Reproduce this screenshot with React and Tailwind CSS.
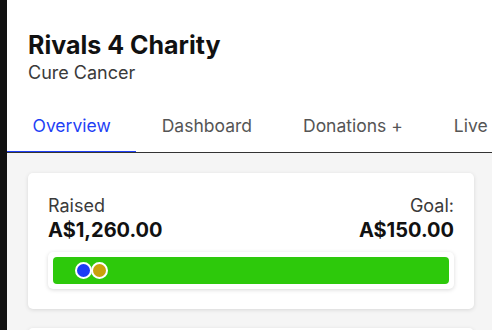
import React from "react";

export default function App() {
  const tabs = ["Overview", "Dashboard", "Donations +", "Live"];

  return (
    <div
      className="flex h-[330px] w-[492px] overflow-hidden bg-black"
      style={{ fontFamily: "Inter, 'Noto Sans', sans-serif" }}
    >
      <div className="w-[7px] shrink-0 bg-[#111111]" />
      <div className="flex min-w-0 flex-1 flex-col bg-[#f5f5f5]">
        {/* header */}
        <div className="bg-white">
          <div className="px-[21px] pt-[30px]">
            <h1 className="text-[25px] font-bold leading-[30px] text-[#111111]">
              Rivals 4 Charity
            </h1>
            <p className="text-[18px] leading-[26px] text-[#3a3a3a]">Cure Cancer</p>
          </div>
          <div className="mt-[28px] flex overflow-hidden border-b border-[#333333] whitespace-nowrap">
            {tabs.map((t, i) => (
              <div
                key={t}
                className={`-mb-px shrink-0 px-[25.5px] pb-[13px] text-[17.5px] leading-[24px] ${
                  i === 0
                    ? "border-b-2 border-[#1f3ff5] text-[#1f3ff5]"
                    : "border-b-2 border-transparent text-[#555555]"
                }`}
              >
                {t}
              </div>
            ))}
          </div>
        </div>

        {/* body */}
        <div className="flex flex-col gap-[19px] pl-[21px] pr-[18px] pt-[20px]">
          <div className="rounded-[5px] bg-white px-[20px] pb-[20px] pt-[22px] shadow-[0_1px_4px_rgba(0,0,0,0.12)]">
            <div className="flex justify-between">
              <div>
                <div className="text-[18px] leading-[22px] text-[#3a3a3a]">Raised</div>
                <div className="text-[20px] font-bold leading-[26px] text-[#111111]">
                  A$1,260.00
                </div>
              </div>
              <div className="text-right">
                <div className="text-[18px] leading-[22px] text-[#3a3a3a]">Goal:</div>
                <div className="text-[20px] font-bold leading-[26px] text-[#111111]">
                  A$150.00
                </div>
              </div>
            </div>
            <div className="mt-[9px] rounded-[5px] bg-white p-[5px] shadow-[0_1px_4px_rgba(0,0,0,0.15)]">
              <div className="flex h-[27px] items-center rounded-[4px] bg-[#2dc90b] pl-[22px]">
                <span className="h-[17px] w-[17px] rounded-full border-2 border-white bg-[#1d3cf5]" />
                <span className="-ml-[1px] h-[17px] w-[17px] rounded-full border-2 border-white bg-[#c9a10a]" />
              </div>
            </div>
          </div>
          <div className="h-[40px] rounded-[5px] bg-white shadow-[0_1px_4px_rgba(0,0,0,0.12)]" />
        </div>
      </div>
    </div>
  );
}
